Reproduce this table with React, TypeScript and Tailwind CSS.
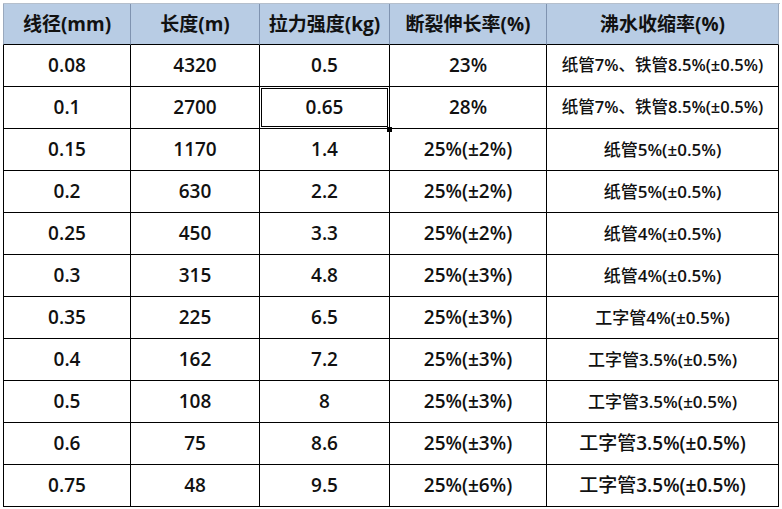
import React from "react";

type Row = { d: string; l: string; t: string; e: string; s: string; sz: string; sel?: boolean };

const rows: Row[] = [
  { d: "0.08", l: "4320", t: "0.5", e: "23%", s: "纸管7%、铁管8.5%(±0.5%)", sz: "text-[16.5px]" },
  { d: "0.1", l: "2700", t: "0.65", e: "28%", s: "纸管7%、铁管8.5%(±0.5%)", sz: "text-[16.5px]", sel: true },
  { d: "0.15", l: "1170", t: "1.4", e: "25%(±2%)", s: "纸管5%(±0.5%)", sz: "text-[17px]" },
  { d: "0.2", l: "630", t: "2.2", e: "25%(±2%)", s: "纸管5%(±0.5%)", sz: "text-[17px]" },
  { d: "0.25", l: "450", t: "3.3", e: "25%(±2%)", s: "纸管4%(±0.5%)", sz: "text-[17px]" },
  { d: "0.3", l: "315", t: "4.8", e: "25%(±3%)", s: "纸管4%(±0.5%)", sz: "text-[17px]" },
  { d: "0.35", l: "225", t: "6.5", e: "25%(±3%)", s: "工字管4%(±0.5%)", sz: "text-[17px]" },
  { d: "0.4", l: "162", t: "7.2", e: "25%(±3%)", s: "工字管3.5%(±0.5%)", sz: "text-[17px]" },
  { d: "0.5", l: "108", t: "8", e: "25%(±3%)", s: "工字管3.5%(±0.5%)", sz: "text-[17px]" },
  { d: "0.6", l: "75", t: "8.6", e: "25%(±3%)", s: "工字管3.5%(±0.5%)", sz: "text-[19px]" },
  { d: "0.75", l: "48", t: "9.5", e: "25%(±6%)", s: "工字管3.5%(±0.5%)", sz: "text-[19px]" },
];

const headers = ["线径(mm)", "长度(m)", "拉力强度(kg)", "断裂伸长率(%)", "沸水收缩率(%)"];

const cell = "h-[42px] flex items-center justify-center border-r border-b border-black";

function Mixed({ text }: { text: string }) {
  const parts = text.split(/([\u4e00-\u9fff\u3001]+)/).filter(Boolean);
  return (
    <span>
      {parts.map((p, i) =>
        /[\u4e00-\u9fff\u3001]/.test(p) ? (
          <span key={i} className="font-medium">
            {p}
          </span>
        ) : (
          <span key={i} className="font-semibold">
            {p}
          </span>
        )
      )}
    </span>
  );
}

export default function App() {
  return (
    <div
      className="w-[782px] h-[509px] bg-white pl-[3px] pt-[3px] text-[#111]"
      style={{ fontFamily: '"Open Sans", "Noto Sans CJK SC", sans-serif' }}
    >
      <div className="grid grid-cols-[128px_129px_130px_157px_232px] w-[777px] border-t border-t-[#b5bfcc]">
        {headers.map((h, i) => (
          <div
            key={h}
            className={`h-[41px] flex items-center justify-center bg-[#b8cce4] border-b border-b-black text-[19px] font-bold border-r ${
              i === 4 ? "border-r-[#9aa9bd]" : "border-r-[#7f93b0]"
            } ${i === 0 ? "border-l border-l-[#9aa9bd]" : ""}`}
          >
            {h}
          </div>
        ))}
        {rows.map((r, ri) => (
          <React.Fragment key={ri}>
            <div className={`${cell} font-semibold text-[19px] border-l border-l-black`}>{r.d}</div>
            <div className={`${cell} font-semibold text-[19px]`}>{r.l}</div>
            <div className={`${cell} font-semibold relative text-[19px]`}>
              {r.sel && (
                <>
                  <div className="absolute inset-x-[1px] top-[1px] bottom-[1px] border border-black" />
                  <div className="absolute right-[-3px] bottom-[-4px] w-[5px] h-[5px] bg-black" />
                </>
              )}
              <span className="relative">{r.t}</span>
            </div>
            <div className={`${cell} font-semibold text-[19px]`}>{r.e}</div>
            <div className={`${cell} ${r.sz}`}>
              <Mixed text={r.s} />
            </div>
          </React.Fragment>
        ))}
      </div>
    </div>
  );
}
